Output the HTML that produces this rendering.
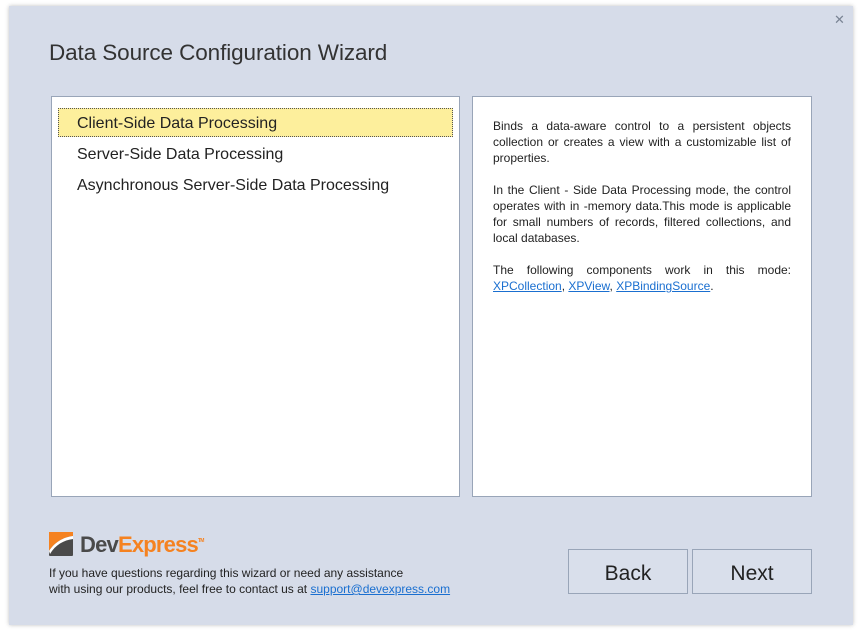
<!DOCTYPE html>
<html><head><meta charset="utf-8"><style>
html,body{margin:0;padding:0;width:861px;height:634px;background:#fff;overflow:hidden;font-family:"Segoe UI","Liberation Sans",sans-serif;}
.win{position:absolute;left:9px;top:6px;width:844px;height:619px;background:#d6dce9;box-shadow:0 0 4px rgba(0,0,0,.25);}
.x{position:absolute;left:825px;top:6px;font-size:13px;color:#7a8494;}
.title{position:absolute;left:40px;top:34px;font-size:22.5px;color:#333;letter-spacing:-0.1px;}
.lp{position:absolute;left:42px;top:90px;width:407px;height:399px;background:#fff;border:1px solid #99a5b8;}
.rp{position:absolute;left:463px;top:90px;width:338px;height:399px;background:#fff;border:1px solid #99a5b8;}
.sel{position:absolute;left:6px;top:11px;width:393px;height:27px;background:#fdef9c;border:1px dotted #555;}
.it{position:absolute;left:25px;font-size:16px;color:#222;}
.txt{position:absolute;left:20px;top:21px;width:298px;font-size:12px;line-height:16px;color:#222;text-align:justify;}
.txt p{margin:0 0 16px 0;}
a{color:#1a6fd0;text-decoration:underline;}
.btn{position:absolute;top:543px;width:118px;height:43px;border:1px solid #99a5b8;background:#d9dfeb;font-size:21px;color:#222;text-align:center;line-height:48px;}
.foot{position:absolute;left:40px;top:559px;font-size:12px;line-height:16px;color:#222;}
.logo{position:absolute;left:40px;top:526px;}
.dx{position:absolute;left:31px;top:0px;font-size:22px;font-weight:bold;color:#4a4a4a;letter-spacing:-0.8px;white-space:nowrap;}
.dx span{color:#f58220;}
.dx sup{font-size:5px;color:#f58220;vertical-align:top;position:relative;top:6px;}
</style></head><body>
<div class="win">
<div class="x">✕</div>
<div class="title">Data Source Configuration Wizard</div>
<div class="lp">
<div class="sel"></div>
<div class="it" style="top:18px">Client-Side Data Processing</div>
<div class="it" style="top:49px">Server-Side Data Processing</div>
<div class="it" style="top:80px">Asynchronous Server-Side Data Processing</div>
</div>
<div class="rp"><div class="txt">
<p>Binds a data-aware control to a persistent objects collection or creates a view with a customizable list of properties.</p>
<p>In the Client - Side Data Processing mode, the control operates with in -memory data.This mode is applicable for small numbers of records, filtered collections, and local databases.</p>
<p>The following components work in this mode: <a>XPCollection</a>, <a>XPView</a>, <a>XPBindingSource</a>.</p>
</div></div>
<div class="logo">
<svg width="24" height="24" viewBox="0 0 24 24" style="position:absolute;left:0;top:0">
<rect x="0" y="0" width="24" height="24" rx="1" fill="#4a4a4a"/>
<path d="M0 0H24V4C14 5 5 11 0 19Z" fill="#f58220"/>
<path d="M0 19C5 11 14 5 24 4V7C15 8 6 13 1 22Z" fill="#fff"/>
</svg>
<div class="dx">Dev<span>Express</span><sup>TM</sup></div>
</div>
<div class="foot">If you have questions regarding this wizard or need any assistance<br>with using our products, feel free to contact us at <a>support@devexpress.com</a></div>
<div class="btn" style="left:559px">Back</div>
<div class="btn" style="left:683px">Next</div>
</div>
</body></html>
